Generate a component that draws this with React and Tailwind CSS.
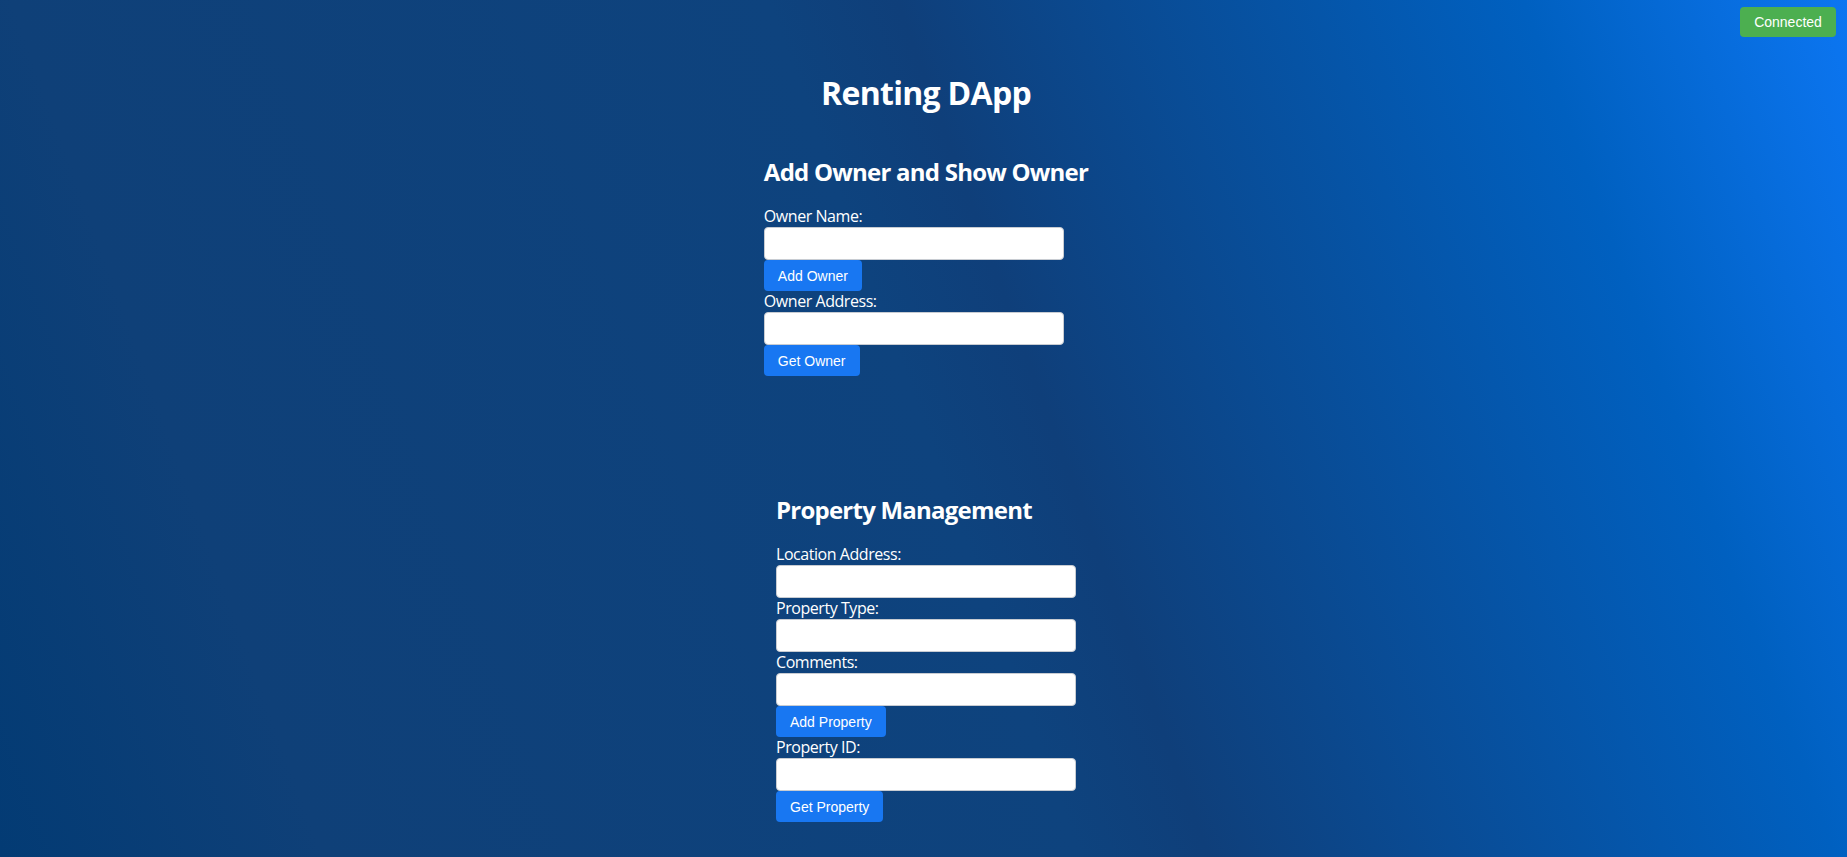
import { useState } from 'react';

const btn =
  "h-[31px] px-[14px] rounded-[4px] bg-[#1877f2] text-white text-[14px] tracking-normal font-['Liberation_Sans',Arial,sans-serif] leading-none";
const input =
  "block w-[300px] h-[33px] rounded-[4px] bg-white border border-[#c8ccd2] text-black text-[14px] px-2 outline-none";
const label = "block text-[16px] leading-[21px]";
const heading = "text-[24px] font-bold leading-[32px] tracking-[-0.032em] mb-[18px]";

function Field({ text, value, onChange }) {
  return (
    <>
      <label className={label}>{text}</label>
      <input className={input} value={value} onChange={(e) => onChange(e.target.value)} />
    </>
  );
}

export default function App() {
  const [ownerName, setOwnerName] = useState('');
  const [ownerAddress, setOwnerAddress] = useState('');
  const [location, setLocation] = useState('');
  const [type, setType] = useState('');
  const [comments, setComments] = useState('');
  const [propertyId, setPropertyId] = useState('');

  return (
    <div className="relative min-h-screen text-white tracking-[-0.028em] font-['Open_Sans','Noto_Sans',sans-serif] bg-[linear-gradient(70deg,#033b74_0%,#0f4078_15%,#0e437e_50%,#0f3f7a_56%,#0060c0_85%,#0c76f2_100%)]">
      {/* wallet status */}
      <button className="absolute top-[7px] right-[11px] h-[30px] w-[96px] rounded-[4px] bg-[#4caf50] text-white text-[14px] tracking-normal font-['Liberation_Sans',Arial,sans-serif]">
        Connected
      </button>

      <div className="flex flex-col items-center pl-[5px] pt-[71px] pb-[35px]">
        <h1 className="text-[32px] font-bold leading-[43px] tracking-[-0.022em]">Renting DApp</h1>

        {/* Owner */}
        <section className="w-fit mt-[42px]">
          <h2 className={heading}>Add Owner and Show Owner</h2>
          <Field text="Owner Name:" value={ownerName} onChange={setOwnerName} />
          <button className={btn}>Add Owner</button>
          <Field text="Owner Address:" value={ownerAddress} onChange={setOwnerAddress} />
          <button className={btn}>Get Owner</button>
        </section>

        {/* Property */}
        <section className="w-fit mt-[118px]">
          <h2 className={heading}>Property Management</h2>
          <Field text="Location Address:" value={location} onChange={setLocation} />
          <Field text="Property Type:" value={type} onChange={setType} />
          <Field text="Comments:" value={comments} onChange={setComments} />
          <button className={btn}>Add Property</button>
          <Field text="Property ID:" value={propertyId} onChange={setPropertyId} />
          <button className={btn}>Get Property</button>
        </section>
      </div>
    </div>
  );
}
